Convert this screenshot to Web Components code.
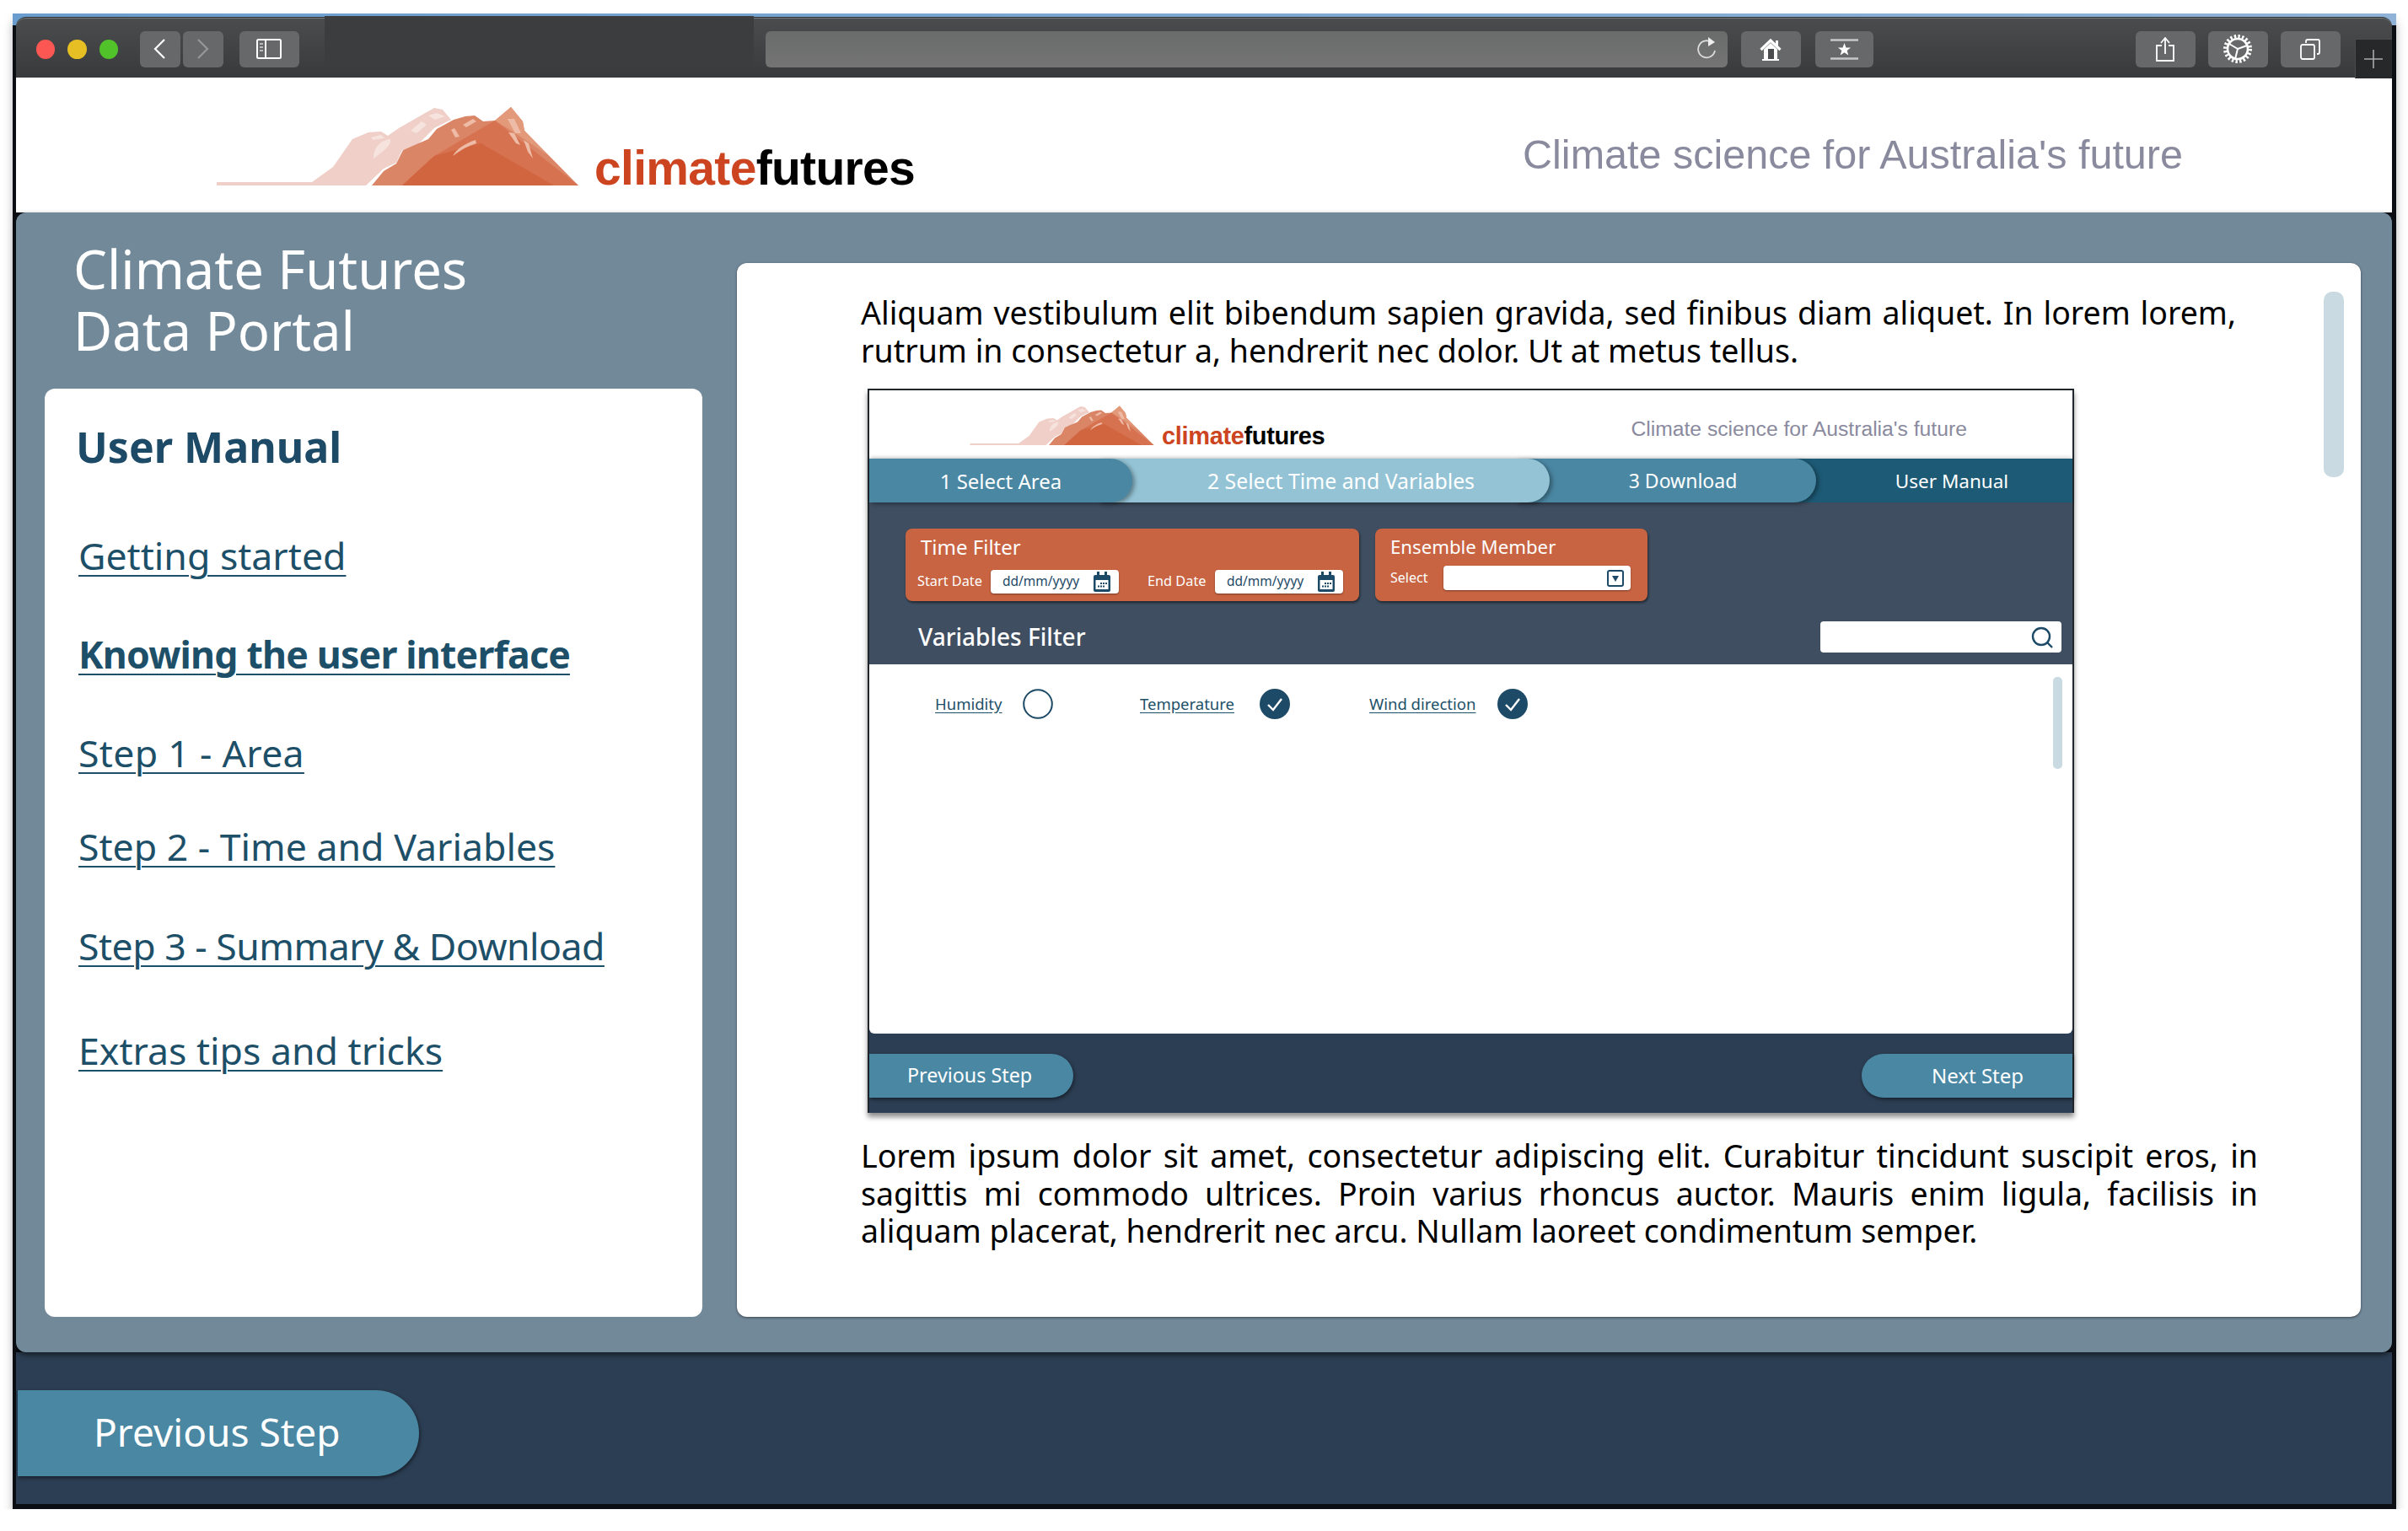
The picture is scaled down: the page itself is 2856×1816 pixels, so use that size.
<!DOCTYPE html>
<html lang="en">
<head>
<meta charset="utf-8">
<title>Climate Futures Data Portal</title>
<style>
  html, body { margin: 0; background: #fff; }
  body { font-family: "Noto Sans", "Open Sans", sans-serif; }
</style>
</head>
<body>
<app-window>
  <browser-bar></browser-bar>
  <site-header></site-header>
  <portal-panel>
    <side-nav slot="side" heading="User Manual">
      <side-link href="#a" style="--gap:64px">Getting started</side-link>
      <side-link href="#b" style="--gap:57px;--weight:700;--track:-.8px">Knowing the user interface</side-link>
      <side-link href="#c" style="--gap:57px;--track:.3px">Step 1 - Area</side-link>
      <side-link href="#d" style="--gap:51px">Step 2 - Time and Variables</side-link>
      <side-link href="#e" style="--gap:58px;--track:-.5px">Step 3 - Summary &amp; Download</side-link>
      <side-link href="#f" style="--gap:64px">Extras tips and tricks</side-link>
    </side-nav>
    <manual-page>
      <p class="first">Aliquam vestibulum elit bibendum sapien gravida, sed finibus diam aliquet. In lorem lorem, rutrum in consectetur a, hendrerit nec dolor. Ut at metus tellus.</p>
      <app-shot></app-shot>
      <p class="second">Lorem ipsum dolor sit amet, consectetur adipiscing elit. Curabitur tincidunt suscipit eros, in sagittis mi commodo ultrices. Proin varius rhoncus auctor. Mauris enim ligula, facilisis in aliquam placerat, hendrerit nec arcu. Nullam laoreet condimentum semper.</p>
    </manual-page>
  </portal-panel>
  <window-foot>
    <step-button side="left" style="--w:476px;--h:102px;--pad:90px;--size:46px;--shift:2px;--lift:5px">Previous Step</step-button>
  </window-foot>
</app-window>

<script>
const MOUNTAIN = `
  <svg viewBox="26 24 431 98" preserveAspectRatio="none" aria-hidden="true">
    <path fill="#efcfc7" d="M27 116H140L165 98 188 65 207 57 222 56 230 61 243 52 285 28 295 30 305 42 285 52 265 72 247 78 240 93 225 100 204 120H27Z"/>
    <path fill="#f6e3de" d="M213 85C214 74 222 66 233 65 235 72 224 80 213 88ZM210 63 222 60 226 64 212 66ZM278 37 288 34 298 38 286 42ZM257 55 270 44 276 48 264 58Z"/>
    <path fill="#db8567" d="M211 120 225 103 240 94 248 78 278 65 288 53 308 42 322 38 333 37 343 44 357 43 376 27 390 44 392 55 456 120Z"/>
    <path fill="#e39a7a" d="M357 43 376 27 390 44 392 55 420 84 372 52Z"/>
    <path fill="#d67250" d="M247 120 285 85 357 43 456 120Z"/>
    <path fill="#d0653f" d="M247 120 285 85 340 70 427 120Z"/>
    <path fill="#eebba6" d="M307 85C312 76 322 70 334 66L335 70C325 73 316 78 307 85ZM305 54 309 52 315 62 310 63ZM319 48 331 41 335 44 323 51ZM372 41 380 41 388 58 381 58ZM373 57 380 58 387 72 382 70ZM391 66 397 70 402 88 396 80Z"/>
  </svg>`

class AppWindow extends HTMLElement {
  constructor () {
    super()
    this.attachShadow({ mode: 'open' }).innerHTML = `
      <style>
        :host {
          display: block;
          width: 2827px;
          margin: 16px 0 0 15px;
          box-sizing: border-box;
          padding: 4px 5px 6px 4px;
          background: linear-gradient(90deg, #6a9ccd, #8fb2d6) top / 100% 14px no-repeat, #0b0f14;
          box-shadow: 0 8px 12px -2px rgba(0,0,0,.4);
        }
      </style>
      <slot></slot>`
  }
}

class BrowserBar extends HTMLElement {
  constructor () {
    super()
    this.attachShadow({ mode: 'open' }).innerHTML = `
      <style>
        :host {
          display: flex;
          align-items: center;
          box-sizing: border-box;
          height: 72px;
          padding: 3px 0 0 24px;
          background: linear-gradient(#4a4c4d, #393a3b);
          border-top: 1px solid #2b3238;
          box-shadow: inset 0 1px 0 #77797a;
          border-radius: 12px 12px 0 0;
        }
        .light { width: 23px; height: 23px; border-radius: 50%; margin-right: 15px; }
        .btn {
          flex: none;
          display: flex;
          align-items: center;
          justify-content: center;
          height: 43px;
          background: #676869;
          border-radius: 6px;
        }
        svg { display: block; }
        .band { flex: none; width: 509px; height: 62px; margin: -5px 14px 0 30px; align-self: flex-start; background: #3c3d3f; }
        .address { flex: none; width: 1141px; justify-content: flex-end; padding-right: 12px; box-sizing: border-box; background: linear-gradient(#6a6b6b, #737473); }
        .plus { flex: none; width: 44px; height: 47px; margin: 22px 0 0 17px; background: #26282a; border: solid #4a4b4c; border-width: 1px 0 0 1px; box-sizing: border-box; display: flex; align-items: center; justify-content: center; }
      </style>
      <span class="light" style="background:#fc5753"></span>
      <span class="light" style="background:#e6bf25"></span>
      <span class="light" style="background:#52c22b;margin-right:0"></span>
      <span class="btn" style="width:48px;margin-left:26px">
        <svg width="15" height="26" viewBox="0 0 15 26"><path d="M13 2 2 13 13 24" fill="none" stroke="#fff" stroke-width="2.2"/></svg>
      </span>
      <span class="btn" style="width:48px;margin-left:3px">
        <svg width="15" height="26" viewBox="0 0 15 26"><path d="M2 2 13 13 2 24" fill="none" stroke="#969798" stroke-width="2.2"/></svg>
      </span>
      <span class="btn" style="width:71px;margin-left:19px">
        <svg width="30" height="24" viewBox="0 0 30 24"><rect x="1" y="1" width="28" height="22" rx="1.500" fill="none" stroke="#fff" stroke-width="2"/><path d="M11 1V23" stroke="#fff" stroke-width="2"/><path d="M4 6H8M4 10H8M4 14H8" stroke="#bbb" stroke-width="2"/></svg>
      </span>
      <span class="band"></span>
      <span class="btn address">
        <svg width="24" height="30" viewBox="0 0 24 30"><path d="M18 8A10 10 0 1 0 21 17" fill="none" stroke="#ddd" stroke-width="1.8"/><path d="M13 1 21 7 13 12Z" fill="#eee"/></svg>
      </span>
      <span class="btn" style="width:71px;margin-left:16px">
        <svg width="26" height="27" viewBox="0 0 26 27"><path d="M1.500 14 13 3 24.500 14" fill="none" stroke="#fff" stroke-width="3.200"/><path d="M19 3H22V9H19Z" fill="#fff"/><path d="M13 6 21 13.500V25H5V13.500Z" fill="#fff"/><path d="M3 25H23V27H3Z" fill="#fff"/><path d="M10 13H17V25H10Z" fill="#4b4c4d"/></svg>
      </span>
      <span class="btn" style="width:69px;margin-left:17px">
        <svg width="33" height="25" viewBox="0 0 33 25"><path d="M0 1.500H33M0 23.500H33" stroke="#c8c8c8" stroke-width="2.400"/><path d="M16.500 5 18.500 10.500H24L19.700 14 21.300 19.500 16.500 16.300 11.700 19.500 13.300 14 9 10.500H14.500Z" fill="#fff"/></svg>
      </span>
      <span class="btn" style="width:71px;margin-left:311px">
        <svg width="22" height="29" viewBox="0 0 22 29"><path d="M7 10H1V28H21V10H15M11 20V2M6 7 11 1 16 7" fill="none" stroke="#fff" stroke-width="1.800"/></svg>
      </span>
      <span class="btn" style="width:71px;margin-left:15px">
        <svg width="36" height="36" viewBox="0 0 36 36"><circle cx="18" cy="18" r="12" fill="none" stroke="#fff" stroke-width="2.600"/><circle cx="18" cy="18" r="15" fill="none" stroke="#fff" stroke-width="4" stroke-dasharray="2.400 2.312"/><path d="M18 18 8 12M18 18 29 14M18 18 15 30" stroke="#fff" stroke-width="2"/></svg>
      </span>
      <span class="btn" style="width:71px;margin-left:15px">
        <svg width="24" height="25" viewBox="0 0 24 25"><rect x="1" y="7" width="16" height="17" rx="2" fill="none" stroke="#fff" stroke-width="1.800"/><path d="M7 5V3Q7 1 9 1H21Q23 1 23 3V16Q23 18 21 18H20" fill="none" stroke="#fff" stroke-width="1.800"/></svg>
      </span>
      <span class="plus">
        <svg width="22" height="22" viewBox="0 0 22 22"><path d="M11 0V22M0 11H22" stroke="#aaa" stroke-width="1.600"/></svg>
      </span>`
  }
}

// logo + tagline, the same header is used at two sizes
class SiteHeader extends HTMLElement {
  constructor () {
    super()
    this.attachShadow({ mode: 'open' }).innerHTML = `
      <style>
        :host {
          display: flex;
          align-items: flex-start;
          height: var(--head-h, 160px);
          box-sizing: border-box;
          background: #fff;
          font-family: "Liberation Sans", Arial, sans-serif;
        }
        .mark { flex: none; width: var(--mark-w, 431px); height: var(--mark-h, 98px); margin: var(--mark-top, 32px) 0 0 var(--mark-left, 237px); }
        .mark svg { display: block; width: 100%; height: 100%; }
        .word {
          flex: none;
          margin: var(--word-top, 75px) 0 0 var(--word-gap, 18px);
          font-size: var(--word-size, 57px);
          line-height: 1.15;
          font-weight: 700;
          letter-spacing: -.012em;
          color: #000;
        }
        .word b { color: #cc4420; font-weight: 700; }
        .tag {
          margin: var(--tag-top, 64px) 0 0 var(--tag-gap, 721px);
          font-size: var(--tag-size, 48.500px);
          line-height: 1.15;
          color: #8a8a9e;
          white-space: nowrap;
        }
      </style>
      <span class="mark">${MOUNTAIN}</span>
      <span class="word"><b>climate</b>futures</span>
      <span class="tag">Climate science for Australia's future</span>`
  }
}

class PortalPanel extends HTMLElement {
  constructor () {
    super()
    this.attachShadow({ mode: 'open' }).innerHTML = `
      <style>
        :host {
          display: grid;
          grid-template-columns: 780px 1926px;
          column-gap: 41px;
          box-sizing: border-box;
          height: 1352px;
          padding: 0 38px 42px 34px;
          background: #72899a;
          border-radius: 12px;
          position: relative;
          z-index: 1;
          box-shadow: 0 3px 6px rgba(0,0,0,.55);
          color: #fff;
        }
        .left { display: flex; flex-direction: column; min-height: 0; }
        h1 {
          margin: 30px 0 33px 34px;
          font-size: 63.300px;
          line-height: 73px;
          font-weight: 400;
        }
        .right { padding-top: 60px; display: flex; min-height: 0; }
      </style>
      <div class="left">
        <h1>Climate Futures<br>Data Portal</h1>
        <slot name="side"></slot>
      </div>
      <div class="right"><slot></slot></div>`
  }
}

class SideNav extends HTMLElement {
  constructor () {
    super()
    this.attachShadow({ mode: 'open' }).innerHTML = `
      <style>
        :host {
          display: block;
          flex: 1;
          box-sizing: border-box;
          padding: 34px 20px 0 40px;
          background: #fff;
          border-radius: 12px;
        }
        h2 {
          margin: 0 0 0 -3px;
          font-size: 50px;
          line-height: 70px;
          font-weight: 700;
          color: #1d4a66;
        }
      </style>
      <h2>${this.getAttribute('heading')}</h2>
      <slot></slot>`
  }
}

class SideLink extends HTMLElement {
  constructor () {
    super()
    this.attachShadow({ mode: 'open' }).innerHTML = `
      <style>
        :host { display: block; margin-top: var(--gap, 57px); }
        a {
          font-size: 44.600px;
          line-height: 60px;
          letter-spacing: var(--track, 0);
          display: block;
          width: max-content;
          color: #1d5068;
          font-weight: var(--weight, 400);
          text-decoration: underline;
          text-decoration-thickness: 2px;
          text-underline-offset: 6px;
        }
      </style>
      <a href="${this.getAttribute('href')}"><slot></slot></a>`
  }
}

class ManualPage extends HTMLElement {
  constructor () {
    super()
    this.attachShadow({ mode: 'open' }).innerHTML = `
      <style>
        :host {
          display: block;
          flex: 1;
          position: relative;
          box-sizing: border-box;
          padding: 36px 0 0 147px;
          background: #fff;
          border-radius: 12px;
          box-shadow: 0 1px 3px rgba(0,0,0,.5);
          color: #000;
          font-size: 37.500px;
          line-height: 45px;
        }
        ::slotted(p) { margin: 0; text-align: justify; }
        ::slotted(.first) { width: 1631px; }
        ::slotted(.second) { width: 1657px; margin-top: 29px; line-height: 44.500px; }
        .thumb { position: absolute; left: 1882px; top: 34px; width: 24px; height: 220px; border-radius: 10px; background: #c9dae3; }
      </style>
      <span class="thumb"></span>
      <slot></slot>`
  }
}

class AppShot extends HTMLElement {
  constructor () {
    super()
    this.attachShadow({ mode: 'open' }).innerHTML = `
      <style>
        :host {
          display: block;
          width: 1431px;
          height: 859px;
          box-sizing: border-box;
          margin: 23px 0 0 8px;
          border: 2px solid #20262c;
          border-bottom: 0;
          background: #2c3e53;
          box-shadow: 0 5px 6px rgba(0,0,0,.45);
          color: #fff;
          font-size: 24px;
        }
        site-header {
          --head-h: 81px;
          --mark-left: 119px; --mark-top: 17px; --mark-w: 219px; --mark-h: 49px;
          --word-size: 29px; --word-top: 38px; --word-gap: 9px;
          --tag-size: 24.700px; --tag-top: 32px; --tag-gap: 363px;
        }
        .bar { height: 192px; box-sizing: border-box; padding-top: 31px; background: #3f4e61; }
        .filters { display: flex; gap: 19px; padding-left: 43px; }
        .vars { display: flex; align-items: center; justify-content: space-between; height: 37px; margin-top: 24px; padding: 0 13px 0 58px; }
        .vars b { font-size: 28px; font-weight: 500; }
        .search { display: flex; align-items: center; justify-content: flex-end; width: 286px; height: 37px; box-sizing: border-box; padding-right: 10px; background: #fff; border-radius: 4px; }
        .list {
          position: relative;
          display: flex;
          box-sizing: border-box;
          height: 438px;
          padding: 29px 0 0 78px;
          background: #fff;
          border-radius: 0 0 6px 6px;
        }
        .thumb { position: absolute; left: 1404px; top: 15px; width: 11px; height: 109px; border-radius: 5px; background: #c9dae3; }
        .foot { display: flex; justify-content: space-between; padding-top: 24px; }
      </style>
      <site-header></site-header>
      <step-tabs></step-tabs>
      <div class="bar">
        <div class="filters">
          <filter-card label="Time Filter" style="width:538px">
            <date-field label="Start Date"></date-field>
            <date-field label="End Date" style="margin-left:34px;--label-w:80px"></date-field>
          </filter-card>
          <filter-card label="Ensemble Member" style="width:323px;--title:22.200px">
            <select-field label="Select"></select-field>
          </filter-card>
        </div>
        <div class="vars">
          <b>Variables Filter</b>
          <span class="search">
            <svg width="26" height="26" viewBox="0 0 26 26"><circle cx="12" cy="12" r="10" fill="none" stroke="#1d4a66" stroke-width="2.400"/><path d="M19 19 25 25" stroke="#1d4a66" stroke-width="2.400"/></svg>
          </span>
        </div>
      </div>
      <div class="list">
        <var-check style="--lw:104px;width:243px">Humidity</var-check>
        <var-check checked style="--lw:142px;width:272px">Temperature</var-check>
        <var-check checked style="--lw:152px">Wind direction</var-check>
        <span class="thumb"></span>
      </div>
      <div class="foot">
        <step-button side="left" style="--w:242px;--h:52px;--pad:45px;--size:23.300px;--lift:2px">Previous Step</step-button>
        <step-button side="right" style="--w:250px;--h:52px;--pad:83px;--size:24px;--lift:2px">Next Step</step-button>
      </div>`
  }
}

class StepTabs extends HTMLElement {
  constructor () {
    super()
    this.attachShadow({ mode: 'open' }).innerHTML = `
      <style>
        :host { display: flex; height: 52px; position: relative; box-shadow: 0 -2px 4px rgba(0,0,0,.15); }
        span {
          position: relative;
          display: flex;
          align-items: center;
          justify-content: center;
          flex: none;
          box-sizing: border-box;
          height: 52px;
          border-radius: 0 26px 26px 0;
          box-shadow: 3px 2px 5px rgba(0,0,0,.35);
          margin-left: -40px;
          padding-left: 40px;
          white-space: nowrap;
        }
        span:first-of-type { margin-left: 0; padding-left: 0; }
        span:last-of-type { border-radius: 0; box-shadow: none; }
      </style>
      <span style="width:312px;background:#4a87a3;z-index:4">1 Select Area</span>
      <span style="width:535px;background:#93c3d5;z-index:3;font-size:24.800px">2 Select Time and Variables</span>
      <span style="width:356px;background:#4a87a3;z-index:2;font-size:23px">3 Download</span>
      <span style="width:344px;background:#1d5a75;z-index:1;font-size:22.500px;padding-left:58px">User Manual</span>`
  }
}

class FilterCard extends HTMLElement {
  constructor () {
    super()
    this.attachShadow({ mode: 'open' }).innerHTML = `
      <style>
        :host {
          display: block;
          box-sizing: border-box;
          height: 86px;
          padding: 6px 14px 0 14px;
          background: #c86442;
          border-radius: 8px;
          box-shadow: 1px 2px 3px rgba(0,0,0,.5);
        }
        h3 { margin: 0 0 0 4px; font-size: var(--title, 24px); line-height: 32px; font-weight: 400; }
        div { display: flex; margin-top: 2px; }
      </style>
      <h3>${this.getAttribute('label')}</h3>
      <div><slot></slot></div>`
  }
}

class DateField extends HTMLElement {
  constructor () {
    super()
    this.attachShadow({ mode: 'open' }).innerHTML = `
      <style>
        :host { display: flex; align-items: center; font-size: 16.300px; }
        label { width: var(--label-w, 87px); white-space: nowrap; }
        span {
          display: flex;
          align-items: center;
          justify-content: space-between;
          width: 152px;
          height: 28px;
          box-sizing: border-box;
          padding: 0 10px 0 14px;
          font-size: 15.500px;
          background: #fff;
          border-radius: 4px;
          box-shadow: 0 1px 2px rgba(0,0,0,.4);
          color: #1d4a66;
        }
      </style>
      <label>${this.getAttribute('label')}</label>
      <span>dd/mm/yyyy
        <svg width="20" height="24" viewBox="0 0 20 24"><path d="M2 4H18Q20 4 20 6V22Q20 24 18 24H2Q0 24 0 22V6Q0 4 2 4Z" fill="#1d4a66"/><path d="M4 0H7V6H4ZM13 0H16V6H13Z" fill="#1d4a66"/><rect x="2.500" y="10" width="15" height="11" fill="#fff"/><path d="M8 13H10V15H8ZM11 13H13V15H11ZM14 13H16V15H14ZM5 16.500H7V18.500H5ZM8 16.500H10V18.500H8ZM11 16.500H13V18.500H11Z" fill="#1d4a66"/></svg>
      </span>`
  }
}

class SelectField extends HTMLElement {
  constructor () {
    super()
    this.attachShadow({ mode: 'open' }).innerHTML = `
      <style>
        :host { display: flex; align-items: center; font-size: 16px; margin-top: -4px; margin-left: 4px; }
        label { width: 63px; }
        span {
          display: flex;
          align-items: center;
          justify-content: flex-end;
          width: 222px;
          height: 29px;
          box-sizing: border-box;
          padding-right: 8px;
          background: #fff;
          border-radius: 4px;
          box-shadow: 0 1px 2px rgba(0,0,0,.4);
        }
      </style>
      <label>${this.getAttribute('label')}</label>
      <span><svg width="20" height="20" viewBox="0 0 20 20"><rect x="1" y="1" width="18" height="18" rx="2" fill="none" stroke="#1d4a66" stroke-width="2"/><path d="M6 7H14L10 14Z" fill="#1d4a66"/></svg></span>`
  }
}

class VarCheck extends HTMLElement {
  constructor () {
    super()
    const mark = this.hasAttribute('checked')
      ? '<circle cx="18" cy="18" r="18" fill="#1d4a66"/><path d="M10 19 16 25 26 12" fill="none" stroke="#fff" stroke-width="2.400"/>'
      : '<circle cx="18" cy="18" r="16.800" fill="#fff" stroke="#1d4a66" stroke-width="2"/>'
    this.attachShadow({ mode: 'open' }).innerHTML = `
      <style>
        :host { display: flex; align-items: center; height: 36px; font-size: 18.500px; flex: none; color: #1d5068; }
        span { width: var(--lw); margin-top: -2px; text-decoration: underline; text-underline-offset: 3px; white-space: nowrap; }
        svg { display: block; }
      </style>
      <span><slot></slot></span>
      <svg width="36" height="36" viewBox="0 0 36 36">${mark}</svg>`
  }
}

class StepButton extends HTMLElement {
  constructor () {
    super()
    const left = this.getAttribute('side') === 'left'
    this.attachShadow({ mode: 'open' }).innerHTML = `
      <style>
        :host {
          display: flex;
          align-items: center;
          box-sizing: border-box;
          width: var(--w);
          height: var(--h);
          margin-left: var(--shift, 0);
          padding: 0 0 var(--lift, 0) var(--pad);
          font-size: var(--size);
          color: #fff;
          background: #4a87a3;
          border-radius: ${left ? '0 999px 999px 0' : '999px 0 0 999px'};
          box-shadow: 1px 2px 4px rgba(0,0,0,.5);
        }
      </style>
      <slot></slot>`
  }
}

class WindowFoot extends HTMLElement {
  constructor () {
    super()
    this.attachShadow({ mode: 'open' }).innerHTML = `
      <style>
        :host { display: block; box-sizing: border-box; height: 180px; padding-top: 45px; background: #2c3e53; color: #fff; }
      </style>
      <slot></slot>`
  }
}

customElements.define('app-window', AppWindow)
customElements.define('browser-bar', BrowserBar)
customElements.define('site-header', SiteHeader)
customElements.define('portal-panel', PortalPanel)
customElements.define('side-nav', SideNav)
customElements.define('side-link', SideLink)
customElements.define('manual-page', ManualPage)
customElements.define('app-shot', AppShot)
customElements.define('step-tabs', StepTabs)
customElements.define('filter-card', FilterCard)
customElements.define('date-field', DateField)
customElements.define('select-field', SelectField)
customElements.define('var-check', VarCheck)
customElements.define('step-button', StepButton)
customElements.define('window-foot', WindowFoot)
</script>
</body>
</html>
